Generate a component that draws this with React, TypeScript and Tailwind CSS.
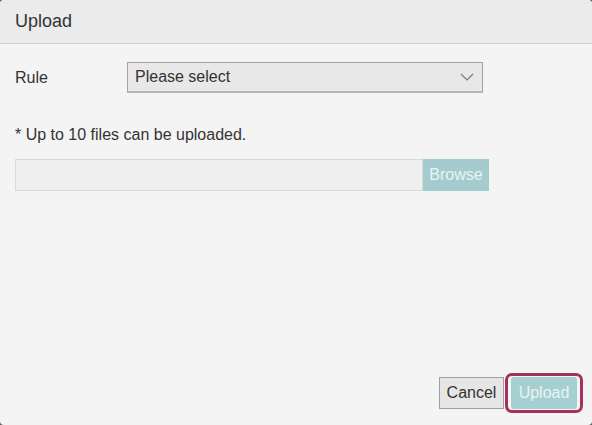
export default function App() {
  return (
    <div className="h-[425px] w-[592px] bg-[#5a5a5a]" style={{ fontFamily: '"Liberation Sans", Arial, sans-serif' }}>
      <div className="flex h-full w-full flex-col overflow-hidden rounded-[4px] bg-[#f4f4f4] text-[#333]">
        <div className="flex h-[44px] shrink-0 items-center border-b border-[#d2d2d2] bg-[#ebebeb] px-[15px] text-[18px]">
          Upload
        </div>

        <div className="flex flex-1 flex-col px-[15px]">
          <div className="mt-[18px] flex items-center">
            <div className="w-[112px] text-[16px]">Rule</div>
            <div className="flex h-[31px] w-[356px] items-center justify-between border border-b-2 border-[#a3a3a3] border-b-[#b5b5b5] bg-[#e8e8e8] pl-[7px] pr-[7px] text-[16px]">
              <span>Please select</span>
              <svg width="14" height="8" viewBox="0 0 14 8" fill="none" className="mr-[1px]">
                <path d="M1 1 L7 7 L13 1" stroke="#7a7a7a" strokeWidth="1.2" />
              </svg>
            </div>
          </div>

          <div className="mt-[32px] text-[16px] leading-[20px]">* Up to 10 files can be uploaded.</div>

          <div className="mt-[14px] flex h-[32px]">
            <div className="w-[408px] border border-[#dadada] bg-[#efefef]" />
            <div className="flex w-[66px] items-center justify-center bg-[#a4cbcd] text-[16px] text-[#e9f4f4]">
              Browse
            </div>
          </div>

          <div className="flex-1" />

          <div className="mb-[12px] mr-[-6px] flex items-center justify-end gap-[1px]">
            <div className="flex h-[32px] w-[65px] items-center justify-center border border-[#a0a0a0] bg-[#e6e6e6] text-[16px]">
              Cancel
            </div>
            <div className="rounded-[7px] border-[3px] border-[#a3315e] px-[3px] py-[1px]">
              <div className="flex h-[32px] w-[66px] items-center justify-center rounded-[3px] bg-[#a5cfd1] text-[16px] text-[#e8f4f4]">
                Upload
              </div>
            </div>
          </div>
        </div>
      </div>
    </div>
  )
}
